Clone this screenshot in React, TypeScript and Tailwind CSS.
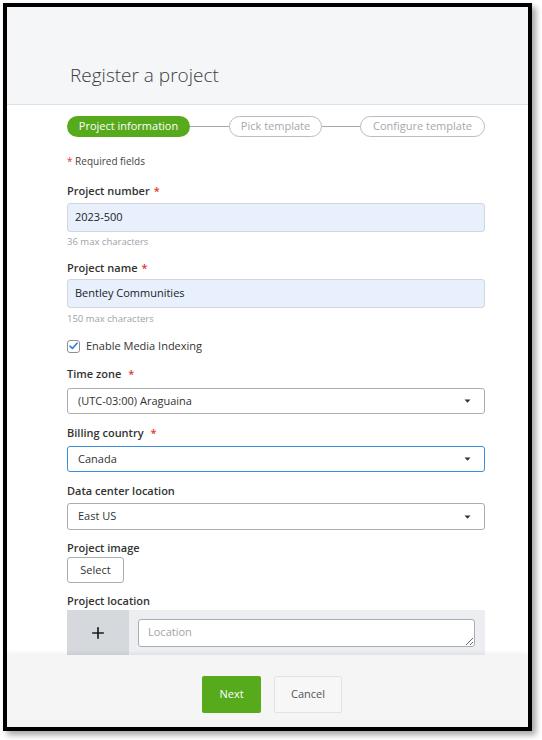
import { FiPlus } from "react-icons/fi";

const Label = ({ text, star, gap }: { text: string; star?: boolean; gap?: boolean }) => (
  <div className="text-[11px] font-semibold text-[#333] leading-[16px]">
    {text}
    {star && <span className={`text-[#e0362b] ${gap ? "ml-[7px]" : "ml-[4px]"}`}>*</span>}
  </div>
);

const Caret = () => (
  <svg width="7" height="4" viewBox="0 0 7 4" className="shrink-0">
    <path d="M0.5 0.5 L6.5 0.5 L3.5 3.7 Z" fill="#333" />
  </svg>
);

const SelectBox = ({ value, focused, h }: { value: string; focused?: boolean; h: string }) => (
  <div
    className={`${h} rounded-[3px] border bg-white flex items-center justify-between pl-[10px] pr-[13px] ${
      focused ? "border-[#3a8ddb]" : "border-[#a9adb2]"
    }`}
  >
    <span className="text-[11px] text-[#333]">{value}</span>
    <Caret />
  </div>
);

const Step = ({ text, active, w }: { text: string; active?: boolean; w: string }) => (
  <div
    className={`${w} h-[21px] rounded-full flex items-center justify-center text-[11px] whitespace-nowrap ${
      active ? "bg-[#56aa1c] text-white" : "border border-[#b9bcc0] text-[#a4a8ad] bg-white"
    }`}
  >
    {text}
  </div>
);

export default function App() {
  return (
    <div className="w-[542px] h-[740px] bg-white pt-[3px] pl-[3px] font-['Open_Sans',sans-serif]">
      <div className="w-[529px] h-[728px] border-4 border-black flex flex-col shadow-[4px_4px_6px_rgba(0,0,0,0.35)] overflow-hidden">
        {/* header */}
        <div className="h-[98px] shrink-0 bg-[#f5f6f8] border-b border-[#dfe1e4] flex items-end pl-[63px] pb-[17px]">
          <h1 className="text-[19px] font-light text-[#3c3c3c] leading-[24px]">Register a project</h1>
        </div>

        {/* body */}
        <div className="flex-1 overflow-hidden bg-white pl-[60px]">
          <div className="w-[418px]">
            <div className="mt-[11px] flex items-center">
              <Step text="Project information" active w="w-[123px]" />
              <div className="w-[39px] h-px bg-[#a4a8ad]" />
              <Step text="Pick template" w="w-[93px]" />
              <div className="w-[38px] h-px bg-[#a4a8ad]" />
              <Step text="Configure template" w="w-[125px]" />
            </div>

            <div className="mt-[17px] text-[10px] text-[#444] leading-[14px]">
              <span className="text-[#e0362b]">*</span> Required fields
            </div>

            <div className="mt-[15px]">
              <Label text="Project number" star />
              <div className="mt-[4px] h-[29px] rounded-[3px] border border-[#d3d7dc] bg-[#e8f0fe] flex items-center pl-[7px] text-[11px] text-[#222]">
                2023-500
              </div>
              <div className="mt-[3px] text-[9.5px] text-[#9ea2a7] leading-[14px]">36 max characters</div>
            </div>

            <div className="mt-[11px]">
              <Label text="Project name" star />
              <div className="mt-[3px] h-[29px] rounded-[3px] border border-[#d3d7dc] bg-[#e8f0fe] flex items-center pl-[7px] text-[11px] text-[#222]">
                Bentley Communities
              </div>
              <div className="mt-[4px] text-[9.5px] text-[#9ea2a7] leading-[14px]">150 max characters</div>
            </div>

            <div className="mt-[12px] h-[16px] flex items-center">
              <div className="w-[13px] h-[13px] rounded-[3px] border border-[#8c9095] bg-white flex items-center justify-center">
                <svg width="9" height="8" viewBox="0 0 9 8">
                  <path d="M1 4.2 L3.4 6.5 L8 1.2" stroke="#2b7de0" strokeWidth="1.6" fill="none" strokeLinecap="round" strokeLinejoin="round" />
                </svg>
              </div>
              <span className="ml-[6px] text-[11px] text-[#333]">Enable Media Indexing</span>
            </div>

            <div className="mt-[12px]">
              <Label text="Time zone" star gap />
              <div className="mt-[6px]">
                <SelectBox value="(UTC-03:00) Araguaina" h="h-[26px]" />
              </div>
            </div>

            <div className="mt-[11px]">
              <Label text="Billing country" star gap />
              <div className="mt-[5px]">
                <SelectBox value="Canada" focused h="h-[26px]" />
              </div>
            </div>

            <div className="mt-[11px]">
              <Label text="Data center location" />
              <div className="mt-[4px]">
                <SelectBox value="East US" h="h-[27px]" />
              </div>
            </div>

            <div className="mt-[10px]">
              <Label text="Project image" />
              <button className="mt-[1px] w-[57px] h-[26px] rounded-[3px] border border-[#a9adb2] bg-white text-[11px] text-[#333]">
                Select
              </button>
            </div>

            <div className="mt-[10px]">
              <Label text="Project location" />
              <div className="mt-[1px] h-[46px] bg-[#eceef1] flex">
                <div className="w-[62px] bg-[#d5d8dc] flex items-center justify-center">
                  <FiPlus className="w-[18px] h-[18px] text-[#1a1a1a]" strokeWidth={2.2} />
                </div>
                <textarea
                  placeholder="Location"
                  className="ml-[9px] mt-[9px] w-[337px] h-[28px] rounded-[3px] border border-[#a9adb2] bg-white text-[11px] pl-[9px] pt-[4px] leading-[16px] placeholder-[#a0a4a9] outline-none"
                />
              </div>
            </div>
          </div>
        </div>

        {/* footer */}
        <div className="h-[72px] shrink-0 bg-[#f5f5f5] shadow-[0_-2px_4px_rgba(0,0,0,0.06)] flex items-start justify-center gap-[13px] pl-[9px] pt-[21px] relative">
          <button className="w-[59px] h-[37px] rounded-[2px] bg-[#56aa1c] text-white text-[11px]">Next</button>
          <button className="w-[68px] h-[37px] rounded-[2px] border border-[#e0e2e5] bg-[#f7f7f7] text-[#555] text-[11px]">
            Cancel
          </button>
        </div>
      </div>
    </div>
  );
}
